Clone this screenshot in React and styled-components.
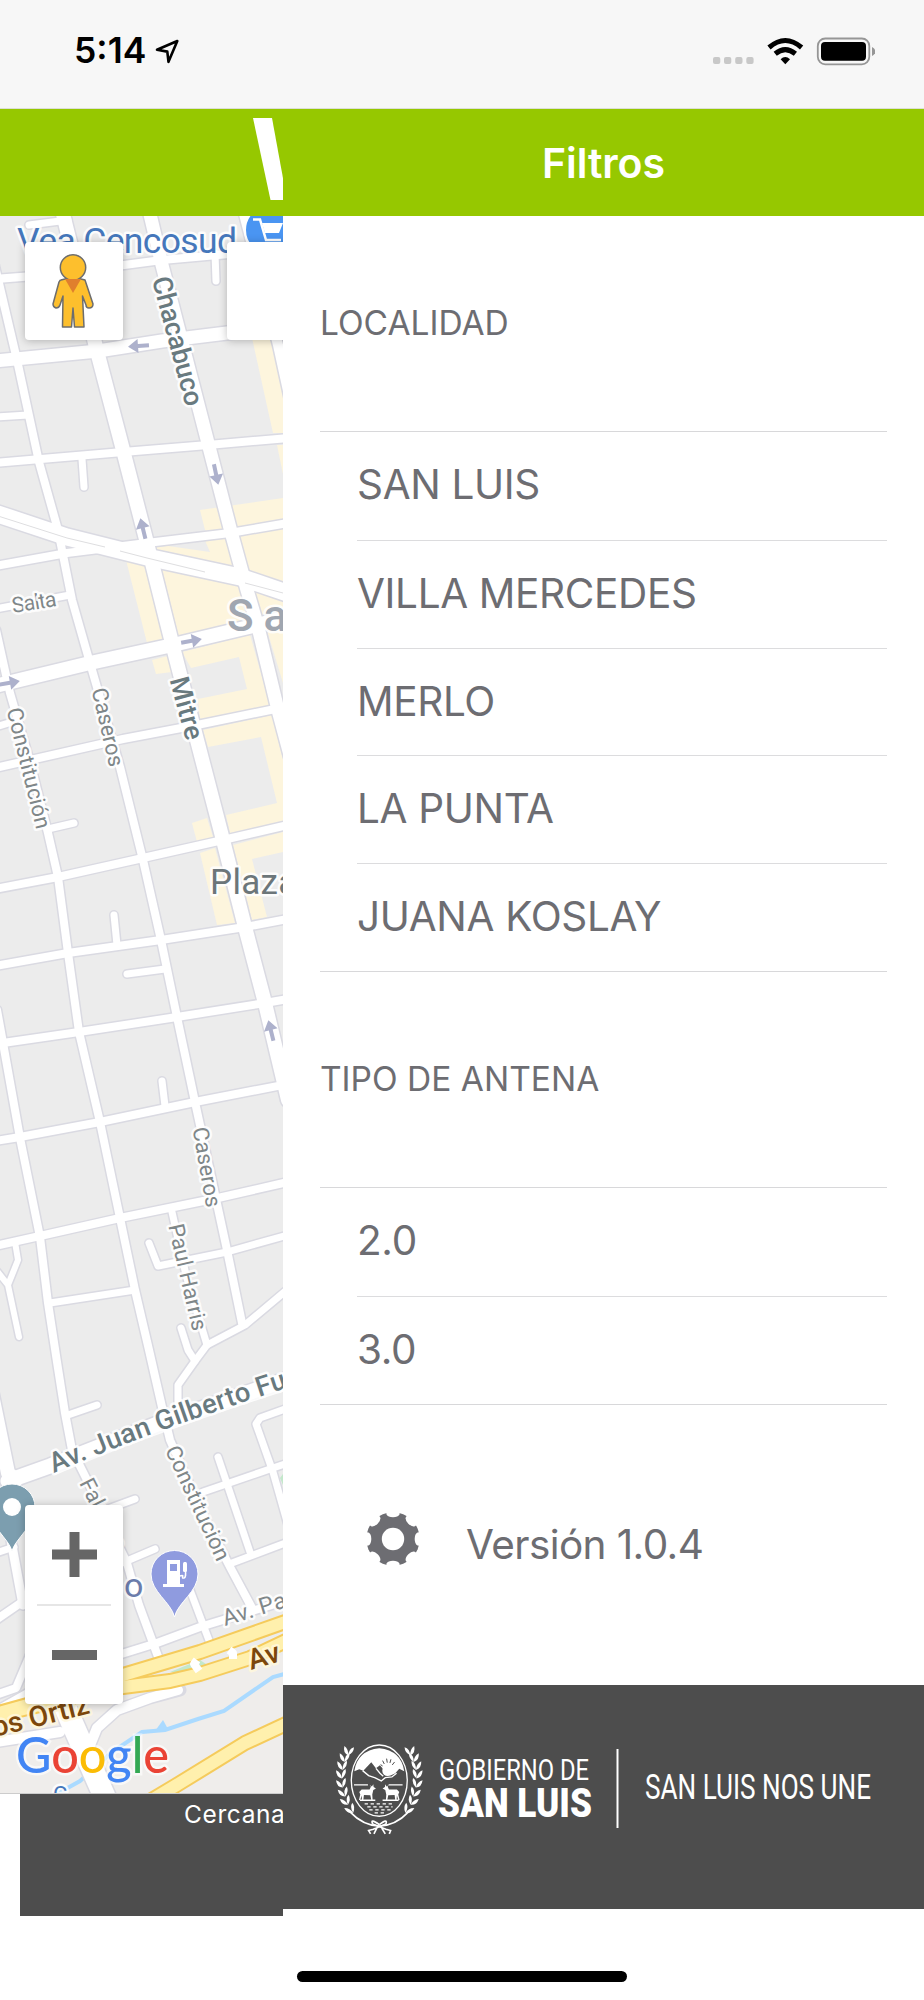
import React from 'react'
import styled, { createGlobalStyle } from 'styled-components'

const localities = ['SAN LUIS', 'VILLA MERCEDES', 'MERLO', 'LA PUNTA', 'JUANA KOSLAY']
const antennas = ['2.0', '3.0']

// [path, width]
const roads = [
  ['M-6 262L17 360L39 462L58 530L72 600L90 663L120 767L143 860L161 940L177 1017L195 1102L227 1250L242 1323', 8],
  ['M62 210L98 355L123 450L147 543L173 647L197 740L223 840L245 927L265 1003L288 1100', 14],
  ['M149 210L162 265L208 443L230 528L247 590L258 627L278 710L290 755', 13],
  ['M243 210L278 345L290 400', 10],
  ['M-4 630L10 693L30 762L48 833L58 877L68 953L79 1032L100 1122L120 1218L135 1290L149 1350L162 1407L170 1440L200 1508L230 1567L252 1608', 8],
  ['M-3 1010L3 1043L20 1138L40 1237L48 1303L57 1362L65 1413L72 1450L87 1480L127 1563L139 1605L160 1662', 8],
  ['M-10 1385L8 1473L16 1480', 14],
  ['M10 1535L23 1605', 9],
  ['M-5 279L60 274L124 265L162 260L240 253', 8],
  ['M29 225L68 220', 7],
  ['M215 253L216 281', 7],
  ['M-5 361L98 351L162 341L227 333L288 325', 13],
  ['M-5 417L28 415', 7],
  ['M-5 463L123 452L208 445L288 438', 8],
  ['M82 459L84 487', 7],
  ['M-5 513L67 537L147 557L240 577L290 594', 17],
  ['M-5 566L67 553L147 543L230 533L288 523', 8],
  ['M-5 609L70 595', 7],
  ['M-5 686L90 663L173 645L257 625L288 617', 14],
  ['M-5 727L12 722', 7],
  ['M-5 768L123 739L197 725L280 708', 8],
  ['M48 829L74 823', 7],
  ['M-5 889L58 877L143 858L223 840L288 825', 8],
  ['M117 945L114 915', 7],
  ['M-5 966L68 953L161 940L245 927L288 919', 8],
  ['M127 974L165 969', 7],
  ['M3 1043L79 1032L177 1017L265 1003L288 999', 8],
  ['M165 1106L162 1081', 7],
  ['M-5 1141L20 1137L100 1122L195 1102L288 1084', 8],
  ['M-5 1246L40 1236L120 1218L218 1198L288 1182', 8],
  ['M149 1243L158 1266L227 1252L288 1235', 7],
  ['M172 1212L186 1275L207 1345', 7],
  ['M50 1303L135 1290', 7],
  ['M288 1289L245 1325L207 1345L195 1361L178 1385L178 1412', 7],
  ['M181 1328L188 1350L195 1361', 7],
  ['M15 1242L18 1260L8 1285L19 1337M-3 1271L8 1285', 6],
  ['M8 1481L50 1466L160 1423L288 1379', 15],
  ['M68 1415L97 1405', 7],
  ['M105 1510L135 1499', 7],
  ['M122 1563L155 1549', 7],
  ['M288 1408L260 1418L256 1424L273 1472L288 1525', 7],
  ['M203 1492L273 1468L288 1463', 7],
  ['M218 1457L250 1552', 7],
  ['M232 1563L288 1542', 7],
  ['M115 1656L157 1643L200 1627L288 1600', 8],
  ['M190 1590L210 1643', 7],
  ['M-4 1620L22 1602', 8],
  ['M-4 1553L14 1547', 7],
  ['M-4 1695L16 1688L30 1655', 8],
  ['M-4 1712L35 1690', 10],
]

const blocks = [
  'M252 338L272 338L283 386V433L273 433Z',
  'M277 445L283 445V474Z',
  'M200 510L283 498V528L230 540L205 530Z',
  'M126 560L150 548L208 541L283 523V622L173 645L147 643Z',
  'M152 660L168 656L172 672L156 674Z',
  'M182 652L250 635L270 705L200 720L198 699L247 689L239 657L191 668Z',
  'M257 597L283 600V683Z',
  'M203 730L272 715L283 760V823L230 833L226 815L277 803L261 737L208 747Z',
  'M192 823L207 818L213 837L197 842Z',
  'M200 853L215 848L235 923L217 925Z',
  'M233 845L283 832V852L252 859L267 917L252 920Z',
]

// position, angle, size and spread length of every rotated street name
const streets = [
  { name: 'Chacabuco', at: '178 341', angle: 75, size: 27, length: 133, major: true },
  { name: 'Salta', at: '34 602', angle: -9, size: 21.5, length: 45 },
  { name: 'Mitre', at: '187 708', angle: 75, size: 27, length: 64, major: true },
  { name: 'Caseros', at: '108 727', angle: 77, size: 22, length: 80 },
  { name: 'Constitución', at: '29 768', angle: 76, size: 22, length: 124 },
  { name: 'Caseros', at: '207 1167', angle: 80, size: 22, length: 81 },
  { name: 'Paul Harris', at: '188 1277', angle: 77, size: 22, length: 109 },
  { name: 'Constitución', at: '198 1503', angle: 65, size: 22, length: 124 },
]

const arrows = [
  'translate(139 346) rotate(-184)',
  'translate(216 474) rotate(78)',
  'translate(143 529) rotate(-104)',
  'translate(191 641) rotate(-10)',
  'translate(9 683) rotate(-10)',
  'translate(271 1031) rotate(-104)',
]

const CityMap = () => (
  <MapSvg viewBox="0 216 283 1577">
    <rect y="216" width="283" height="1577" fill="#ececec" />
    <path d="M0 1735L60 1712L125 1697L200 1684L283 1655V1793H0Z" fill="#efedeb" />
    <g fill="#fdf5dd">
      {blocks.map(d => (
        <path key={d} d={d} />
      ))}
    </g>
    <path d="M168 546L203 536L210 552Z" fill="#ececec" />
    <path d="M170 1672L200 1660L206 1664L192 1673ZM280 1478L283 1474V1485Z" fill="#c3e8cb" />
    <path
      d="M288 1673L273 1677L224 1711L198 1719L165 1730L142 1732L112 1752L80 1781L55 1795"
      fill="none"
      stroke="#aadaff"
      strokeWidth="4"
    />
    <path d="M155 1731L163 1720L168 1729Z" fill="#aadaff" />
    <g fill="none" stroke="#dadae2" strokeLinecap="round" strokeLinejoin="round">
      {roads.map(([d, width]) => (
        <path key={d} d={d} strokeWidth={width + 3} />
      ))}
      <path d="M180 1690L150 1698L117 1710L97 1728L88 1750M-4 1742L60 1732" strokeWidth="13" />
      <path d="M62 1700L106 1800" strokeWidth="25" />
    </g>
    <g fill="none" stroke="#fff" strokeLinecap="round" strokeLinejoin="round">
      {roads.map(([d, width]) => (
        <path key={d} d={d} strokeWidth={width} />
      ))}
      <path d="M178 1690L150 1698L117 1710L97 1728L88 1750M-4 1742L60 1732" strokeWidth="10" />
      <path d="M62 1700L106 1800" strokeWidth="22" />
    </g>
    <path d="M-2 516L67 538L105 547M120 551L147 558L205 572M245 583L283 593" fill="none" stroke="#dedee0" />
    <g fill="none" strokeLinejoin="round">
      <g stroke="#f5cb5c" strokeWidth="16">
        <path d="M-5 1716L60 1700L123 1687L170 1681L200 1674L250 1658L288 1640" />
        <path d="M-5 1714L60 1696L123 1675L200 1652L288 1621" />
        <path d="M145 1804L175 1786L245 1743L288 1723" />
      </g>
      <g stroke="#fff0ad" strokeWidth="12">
        <path d="M-5 1716L60 1700L123 1687L170 1681L200 1674L250 1658L288 1640" />
        <path d="M-5 1714L60 1696L123 1675L200 1652L288 1621" />
        <path d="M145 1804L175 1786L245 1743L288 1723" />
      </g>
      <path d="M197 1660L194 1664L199 1671M229 1650L233 1653L233 1659" stroke="#fff" strokeWidth="8" />
    </g>

    {arrows.map(transform => (
      <g key={transform} transform={transform}>
        <path d="M-10 -2H1V-7L11 0L1 7V2H-10Z" fill="#adb1cc" />
      </g>
    ))}

    <circle cx="270" cy="230" r="25" fill="#4a95f2" stroke="#fff" strokeWidth="2" />
    <path d="M253 219.500H260L266 240H281" fill="none" stroke="#fff" strokeWidth="2.500" />
    <path d="M262 223H283L279 233H265Z" fill="#fff" />

    <StreetNames>
      {streets.map(({ name, at, angle, size, length, major }) => (
        <StreetName
          key={name + at}
          transform={`translate(${at}) rotate(${angle})`}
          y={size * 0.35}
          fontSize={size}
          textAnchor="middle"
          textLength={length}
          $major={major}
        >
          {name}
        </StreetName>
      ))}
      <path id="funes" d="M54 1473Q160 1427 340 1371" fill="none" />
      <StreetName $major fontSize="27.500">
        <textPath href="#funes" textLength="294">
          Av. Juan Gilberto Funes
        </textPath>
      </StreetName>
      <StreetName transform="translate(79 1483) rotate(63)" fontSize="22">
        Falucho
      </StreetName>
      <StreetName transform="translate(225 1626) rotate(-17)" fontSize="23" letterSpacing="0.5">
        Av. Parque
      </StreetName>
      <Highway transform="translate(251 1670) rotate(-17)">Av</Highway>
      <Highway transform="translate(91 1713) rotate(-14)" textAnchor="end">
        os Ortiz
      </Highway>
      <Place x="17" y="253" fontSize="35.500" textLength="220" fill="#4577bb">
        Vea Cencosud
      </Place>
      <Place x="227" y="631" fontSize="44" fontWeight="500" letterSpacing="2" wordSpacing="-5" fill="#a0a6b0">
        S a n
      </Place>
      <Place x="210" y="894" fontSize="35" letterSpacing="0.3" fill="#6c767a">
        Plaza
      </Place>
      <Place x="124" y="1597" fontSize="34" fill="#6b7cab">
        o
      </Place>
      <Place x="53" y="1802" fontSize="22" fill="#4577bb">
        G
      </Place>
    </StreetNames>

    <path
      d="M12 1551C9 1539 -11 1526 -11 1507A23 23 0 0 1 35 1507C35 1526 15 1539 12 1551Z"
      fill="#7c9eaf"
      stroke="#fff"
    />
    <circle cx="12" cy="1507" r="9" fill="#fff" />
    <path
      d="M174.500 1617C171 1602 151 1592 151 1574A23.500 23.500 0 0 1 198 1574C198 1592 178 1602 174.500 1617Z"
      fill="#8f9bdf"
      stroke="#fff"
    />
    <path d="M167 1560H180V1584H184V1587H163V1584H167Z" fill="#fff" />
    <rect x="170" y="1564" width="7" height="7" fill="#8f9bdf" />
    <path d="M180 1576C186 1574 180 1579 184 1578C187 1577 185 1571 185 1562" fill="none" stroke="#fff" strokeWidth="1.500" />
    <rect x="183" y="1562" width="4" height="10" rx="1.500" fill="#fff" />

    <GoogleMark x="16" y="1773" textLength="153" lengthAdjust="spacingAndGlyphs">
      <tspan fill="#4285f4">G</tspan>
      <tspan fill="#ea4335">o</tspan>
      <tspan fill="#fbbc05">o</tspan>
      <tspan fill="#4285f4">g</tspan>
      <tspan fill="#34a853">l</tspan>
      <tspan fill="#ea4335">e</tspan>
    </GoogleMark>
  </MapSvg>
)

const Pegman = () => (
  <svg width="42" height="74" viewBox="0 0 42 74">
    <g fill="#fdbf2d" stroke="#6d6d6d" strokeWidth="1.500" strokeLinejoin="round">
      <path d="M9 26Q21 22 33 26L41 50Q41 54 37 54Q34 54 34 51L30.500 42L32 73H22.500L21 54L19.500 73H10.500L11 42L8 51Q7 54 4 54Q1 53 1 50L7 28Q8 26 9 26Z" />
      <circle cx="21" cy="13.500" r="12.700" />
    </g>
    <path d="M13 25H29L21 39Z" fill="#e07f2d" />
  </svg>
)

const leaves = [
  [84, 62, -20],
  [72, 82, -28],
  [65, 106, -30],
  [62, 132, -34],
  [63, 160, -40],
  [69, 187, -46],
  [76, 213, -52],
  [90, 238, -60],
]

const Laurel = () => (
  <>
    {leaves.map(([x, y, angle]) => (
      <g key={y} transform={`translate(${x} ${y}) rotate(${angle + 25})`} fill="#fff">
        <path d="M2 14Q-15 8 -12 -13Q2 -4 2 14Z" />
        <path d="M2 14Q18 4 17 -12Q2 -6 2 14Z" />
      </g>
    ))}
    <path d="M90 246Q130 288 180 289" fill="none" stroke="#fff" strokeWidth="5" />
  </>
)

const Deer = () => (
  <path
    d="M118 186L125 179H149L153 170L149 165L156 170L160 163L161 171L168 176L160 180L157 194L158 210H154L151 196L132 195L130 210H126L125 197L121 210H117L121 194Z"
    fill="#fff"
  />
)

const GovernmentLogo = () => (
  <svg width="560" height="110" viewBox="326 1740 560 110">
    <g transform="translate(320 1730) scale(0.333)">
      <Laurel />
      <g transform="translate(356 0) scale(-1 1)">
        <Laurel />
      </g>
      <ellipse cx="178" cy="152" rx="84" ry="107" fill="#4d4d4d" stroke="#fff" strokeWidth="4" />
      <path
        d="M103 124Q112 62 178 55Q244 62 253 124L238 116L226 130L212 137L200 130L180 106L168 115L154 97L130 122L118 118Z"
        fill="#fff"
      />
      <circle cx="203" cy="122" r="16" fill="#fff" />
      <path
        d="M182 104L188 108M188 92L193 102M200 86L202 98M213 88L210 99M224 96L217 105"
        stroke="#4d4d4d"
        strokeWidth="3"
      />
      <path
        d="M128 122L146 137L166 144L184 153L196 143L216 141L230 130M168 115L180 130L190 139"
        fill="none"
        stroke="#fff"
        strokeWidth="4"
      />
      <path d="M102 165H144M206 165H248M120 211H166M188 211H236" stroke="#fff" strokeWidth="4" />
      <Deer />
      <g transform="translate(356 0) scale(-1 1)">
        <Deer />
      </g>
      <path
        d="M134 222H220M142 231H218M148 240H212M164 249H200"
        stroke="#fff"
        strokeWidth="4"
        strokeDasharray="10 8"
      />
      <path
        d="M178 284Q150 264 158 282L198 298L212 302L208 312M178 284Q204 264 198 282L160 298L146 302L152 312M172 292L162 312M184 292L196 312"
        fill="none"
        stroke="#fff"
        strokeWidth="5"
      />
    </g>
    <LogoText x="439" y="1780" fontSize="29" textLength="150">
      GOBIERNO DE
    </LogoText>
    <LogoText x="438" y="1817" fontSize="41" fontWeight="900" textLength="154">
      SAN LUIS
    </LogoText>
    <path d="M617.500 1749V1828" stroke="#fff" strokeWidth="2" />
    <LogoText x="645" y="1799" fontSize="34.500" textLength="226">
      SAN LUIS NOS UNE
    </LogoText>
  </svg>
)

const Gear = () => (
  <GearSvg width="56" height="56" viewBox="-28 -28 56 56">
    <mask id="teeth">
      <circle r="28" fill="#fff" />
      <circle r="11.200" fill="#000" />
      {[0, 45, 90, 135, 180, 225, 270, 315].map(angle => (
        <path
          key={angle}
          transform={`rotate(${angle})`}
          d="M-7.200 -29L-6.400 -24.500Q-5 -21.700 0 -21.700Q5 -21.700 6.400 -24.500L7.200 -29Z"
          fill="#000"
        />
      ))}
    </mask>
    <circle r="26.700" fill="#6d6d72" mask="url(#teeth)" />
  </GearSvg>
)

const App = () => (
  <Screen>
    <GlobalStyle />
    <StatusBar>
      <Clock>5:14</Clock>
      <svg width="26" height="26" viewBox="156 37 26 26">
        <path
          d="M158 48.800L178.300 40L169.500 60.800L168.300 50.600Z"
          fill="none"
          stroke="#000"
          strokeWidth="2.600"
          strokeLinejoin="round"
        />
      </svg>
      <StatusIcons>
        <svg width="163" height="30" viewBox="712 35 163 30">
          <g fill="#c8c8c8">
            <rect x="713" y="56" width="7.300" height="7" rx="2" />
            <rect x="724" y="56" width="7.300" height="7" rx="2" />
            <rect x="735.200" y="56" width="7.300" height="7" rx="2" />
            <rect x="746.300" y="56" width="7.300" height="7" rx="2" />
          </g>
          <g fill="none" stroke="#000" strokeWidth="5">
            <path d="M769 46.500Q785.300 32.500 801.600 46.500" />
            <path d="M775.200 52.800Q785.300 44.500 795.400 52.800" />
          </g>
          <path d="M780.600 58.200Q785.300 53.800 790 58.200L785.300 63.200Z" />
          <rect x="817.800" y="37.500" width="51.500" height="25.800" rx="7.500" fill="none" stroke="#969696" strokeWidth="1.800" />
          <rect x="821" y="41" width="45" height="18.700" rx="4" />
          <path d="M872 46Q875.500 48 875.500 50.500Q875.500 53 872 55Z" fill="#969696" />
        </svg>
      </StatusIcons>
    </StatusBar>

    <Body>
      <MapPage>
        <NavBar>
          <NavLogo width="30" height="82" viewBox="253 118 30 82">
            <path d="M253 118H272L287 200H270.500Z" fill="#fff" />
          </NavLogo>
        </NavBar>
        <MapArea>
          <CityMap />
          <PegmanButton>
            <Pegman />
          </PegmanButton>
          <FullscreenButton />
          <ZoomControl>
            <ZoomButton>
              <svg width="45" height="45" viewBox="0 0 45 45">
                <path d="M17.500 0H27.500V17.500H45V27.500H27.500V45H17.500V27.500H0V17.500H17.500Z" fill="#666" />
              </svg>
            </ZoomButton>
            <ZoomButton>
              <svg width="45" height="10" viewBox="0 0 45 10">
                <path d="M0 0H45V10H0Z" fill="#666" />
              </svg>
            </ZoomButton>
          </ZoomControl>
        </MapArea>
        <TabBar>Cercanas</TabBar>
      </MapPage>

      <Menu>
        <NavBar $center>Filtros</NavBar>
        <SectionTitle>LOCALIDAD</SectionTitle>
        <List>
          {localities.map(name => (
            <Item key={name}>{name}</Item>
          ))}
        </List>
        <SectionTitle>TIPO DE ANTENA</SectionTitle>
        <List>
          {antennas.map(name => (
            <Item key={name}>{name}</Item>
          ))}
        </List>
        <Version>
          <Gear />
          Versión 1.0.4
        </Version>
        <Footer>
          <GovernmentLogo />
        </Footer>
      </Menu>
    </Body>
    <HomeIndicator />
  </Screen>
)

const GlobalStyle = createGlobalStyle`
  body {
    background: #fff;
    font-family: Inter, 'Liberation Sans', sans-serif;
    margin: 0;
  }

  * {
    box-sizing: border-box;
  }

  svg {
    display: block;
    flex: none;
  }
`

const Screen = styled.div`
  height: 2000px;
  overflow: hidden;
  position: relative;
  width: 924px;
`

const StatusBar = styled.header`
  align-items: center;
  background: #f7f7f7;
  border-bottom: 1px solid #dcdfd4;
  display: flex;
  height: 109px;
  padding: 0 49px 7px 74px;
`

const Clock = styled.span`
  font-size: 35.5px;
  font-weight: 600;
  letter-spacing: 0;
  margin-right: 9px;
`

const StatusIcons = styled.div`
  margin-left: auto;
`

const Body = styled.div`
  display: flex;
`

const MapPage = styled.main`
  flex: none;
  overflow: hidden;
  width: 283px;
`

const NavBar = styled.div`
  align-items: center;
  background: #96c800;
  color: #fff;
  display: flex;
  font-size: 41px;
  font-weight: 600;
  height: 107px;
  justify-content: ${({ $center }) => ($center ? 'center' : 'flex-end')};
  letter-spacing: -0.1px;
`

const NavLogo = styled.svg`
  margin-bottom: 7px;
`

const MapArea = styled.div`
  border-bottom: 1px solid #ccc;
  height: 1578px;
  position: relative;
`

const MapSvg = styled.svg`
  height: 1577px;
  width: 283px;
`

const StreetNames = styled.g`
  font-family: Roboto, sans-serif;
  paint-order: stroke;
  stroke: #fff;
  stroke-linejoin: round;
  stroke-opacity: 0.85;
  stroke-width: 5px;
`

const StreetName = styled.text`
  fill: ${({ $major }) => ($major ? '#697a7f' : '#7f8789')};
  font-weight: ${({ $major }) => ($major ? 500 : 400)};
`

const Highway = styled.text`
  fill: #7c470c;
  font-size: 28.5px;
  font-weight: 500;
  stroke: #fff8dc;
`

const Place = styled.text`
  stroke-width: 5px;
`

const GoogleMark = styled.text`
  font-family: Lato, sans-serif;
  font-size: 50px;
  font-weight: 500;
  paint-order: stroke;
  stroke: #fff;
  stroke-opacity: 0.6;
  stroke-width: 5px;
`

const MapButton = styled.div`
  align-items: center;
  background: #fff;
  border-radius: 4px;
  box-shadow: 0 1px 8px rgba(0, 0, 0, 0.25);
  display: flex;
  height: 98px;
  justify-content: center;
  position: absolute;
  top: 26px;
  width: 98px;
`

const PegmanButton = styled(MapButton)`
  left: 25px;
  padding: 0 3px 0 0;
`

const FullscreenButton = styled(MapButton)`
  left: 227px;
`

const ZoomControl = styled(MapButton)`
  flex-direction: column;
  height: 199px;
  left: 25px;
  padding-bottom: 1px;
  top: 1289px;
`

const ZoomButton = styled.div`
  align-items: center;
  display: flex;
  height: 99px;
  justify-content: center;
  width: 74px;

  &:last-child {
    border-top: 2px solid #e6e6e6;
  }
`

const TabBar = styled.div`
  background: #4d4d4d;
  color: #fff;
  font-size: 24.5px;
  height: 122px;
  letter-spacing: 0.6px;
  line-height: 30px;
  margin-left: 20px;
  padding: 5px 0 0 164px;
  white-space: nowrap;
`

const Menu = styled.aside`
  background: #fff;
  color: #6d6d72;
  flex: 1;
`

const SectionTitle = styled.h2`
  font-size: 33.5px;
  font-weight: 400;
  letter-spacing: 0;
  line-height: 215px;
  margin: 0;
  padding-left: 37px;
`

const List = styled.ul`
  border: solid #d8d8da;
  border-width: 1px 0;
  list-style: none;
  margin: 0 37px;
  padding: 0 0 0 37px;
`

const Item = styled.li`
  font-size: 40.5px;
  height: 107.8px;
  letter-spacing: -0.35px;
  line-height: 106px;

  & + & {
    border-top: 1px solid #dcdcde;
  }
`

const Version = styled.div`
  align-items: center;
  display: flex;
  font-size: 40.5px;
  height: 280px;
  letter-spacing: -0.6px;
  padding-left: 82px;
`

const GearSvg = styled.svg`
  margin: 0 45px 11px 0;
`

const Footer = styled.footer`
  background: #4d4d4d;
  height: 224px;
  padding: 55px 0 0 43px;
`

const LogoText = styled.text.attrs({ lengthAdjust: 'spacingAndGlyphs' })`
  fill: #fff;
  font-family: Roboto, sans-serif;
`

const HomeIndicator = styled.div`
  background: #000;
  border-radius: 6px;
  bottom: 18px;
  height: 11px;
  left: 297px;
  position: absolute;
  width: 330px;
`

export default App
